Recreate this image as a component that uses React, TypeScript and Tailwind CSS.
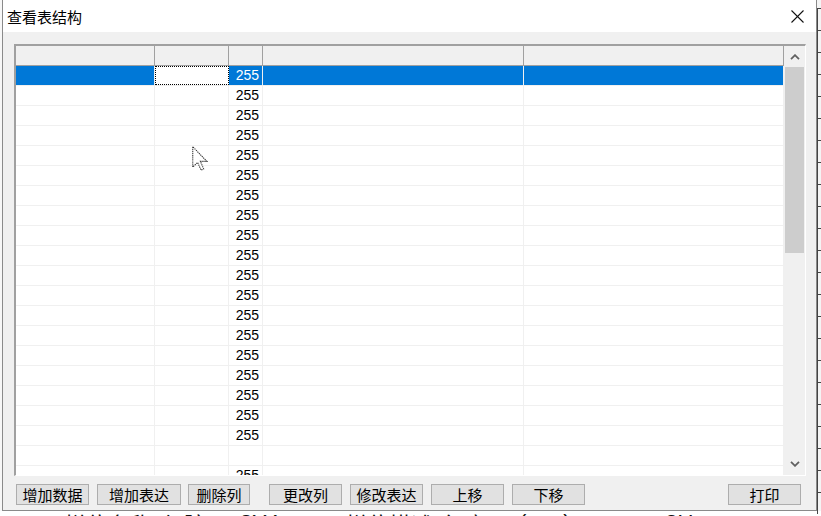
import React from "react";

const cjk = "font-['Noto_Sans_CJK_SC','Noto_Sans_CJK_TC',sans-serif]";

function Row({ v, sel }: { v: string; sel?: boolean }) {
  const bg = sel ? " bg-[#0078d7]" : "";
  return (
    <div className="flex h-[20px] shrink-0">
      <div className={"w-[139px] shrink-0 border-r border-b border-[#f0f0f0]" + bg} />
      {sel ? (
        <div className="w-[74px] shrink-0 border-b border-[#f0f0f0] bg-white">
          <div className="h-full w-full border border-dotted border-black" />
        </div>
      ) : (
        <div className="w-[74px] shrink-0 border-r border-b border-[#f0f0f0]" />
      )}
      <div
        className={
          "w-[34px] shrink-0 border-r border-b border-[#f0f0f0] pr-[3px] text-right font-['Liberation_Sans',Arial,sans-serif] text-[14px] leading-[19px]" +
          (sel ? " bg-[#0078d7] text-white" : " text-black")
        }
      >
        {v}
      </div>
      <div className={"w-[261px] shrink-0 border-r border-b border-[#f0f0f0]" + bg} />
      <div className={"w-[260px] shrink-0 border-r border-b border-[#f0f0f0]" + bg} />
    </div>
  );
}

function Chevron({ up }: { up?: boolean }) {
  return (
    <svg width="10" height="6" viewBox="0 0 10 6" className="block">
      {up ? (
        <polyline points="1,5.2 5,1.2 9,5.2" fill="none" stroke="#606060" strokeWidth="1.8" />
      ) : (
        <polyline points="1,0.8 5,4.8 9,0.8" fill="none" stroke="#606060" strokeWidth="1.8" />
      )}
    </svg>
  );
}

export default function App() {
  const rows: string[] = [];
  for (let i = 0; i < 19; i++) rows.push("255");
  rows.push("");
  rows.push("255");

  return (
    <div className="relative h-[516px] w-[821px] overflow-hidden bg-[#f7f7f7]">
      <div className="flex h-[511px]">
        <div className="w-[2px] shrink-0 bg-[#f7f7f7]" />
        {/* window */}
        <div className="flex h-[511px] w-[815px] shrink-0 flex-col border-x border-b border-[#8a8a8a] bg-[#f0f0f0]">
          {/* title bar */}
          <div className="flex h-[32px] shrink-0 items-center justify-between bg-white pl-[4px] pr-[12px]">
            <span className={cjk + " text-[15px] leading-none text-black"}>查看表结构</span>
            <svg width="13" height="13" viewBox="0 0 13 13" className="block">
              <line x1="0.5" y1="0.5" x2="12.5" y2="12.5" stroke="#111" strokeWidth="1.1" />
              <line x1="12.5" y1="0.5" x2="0.5" y2="12.5" stroke="#111" strokeWidth="1.1" />
            </svg>
          </div>
          {/* body */}
          <div className="flex flex-1 flex-col pl-[11px] pt-[12px]">
            {/* grid */}
            <div className="flex h-[432px] w-[792px] border-t-2 border-l-2 border-t-[#a0a0a0] border-l-[#a0a0a0] border-r border-b border-r-white border-b-white bg-white">
              <div className="flex w-[768px] shrink-0 flex-col overflow-hidden">
                <div className="flex h-[20px] shrink-0 border-b border-[#a0a0a0] bg-[#f0f0f0]">
                  <div className="w-[139px] shrink-0 border-r border-[#a0a0a0]" />
                  <div className="w-[74px] shrink-0 border-r border-[#a0a0a0]" />
                  <div className="w-[34px] shrink-0 border-r border-[#a0a0a0]" />
                  <div className="w-[261px] shrink-0 border-r border-[#a0a0a0]" />
                  <div className="w-[260px] shrink-0 border-r border-[#a0a0a0]" />
                </div>
                <div className="flex flex-1 flex-col overflow-hidden">
                  {rows.map((v, i) => (
                    <Row key={i} v={v} sel={i === 0} />
                  ))}
                </div>
              </div>
              {/* scrollbar */}
              <div className="flex w-[21px] shrink-0 flex-col bg-[#f0f0f0]">
                <div className="flex h-[21px] shrink-0 items-center justify-center">
                  <Chevron up />
                </div>
                <div className="ml-[1px] h-[186px] w-[19px] shrink-0 bg-[#cdcdcd]" />
                <div className="flex-1" />
                <div className="flex h-[20px] shrink-0 items-start justify-center pt-[6px]">
                  <Chevron />
                </div>
              </div>
            </div>
            {/* buttons */}
            <div className={cjk + " mt-[8px] flex h-[21px] text-[15px] leading-none text-black"}>
              <button className="ml-[2px] flex h-[21px] w-[73px] items-center justify-center border border-[#adadad] bg-[#e1e1e1]">增加数据</button>
              <button className="ml-[8px] flex h-[21px] w-[84px] items-center justify-center border border-[#adadad] bg-[#e1e1e1]">增加表达</button>
              <button className="ml-[7px] flex h-[21px] w-[62px] items-center justify-center border border-[#adadad] bg-[#e1e1e1]">删除列</button>
              <button className="ml-[19px] flex h-[21px] w-[73px] items-center justify-center border border-[#adadad] bg-[#e1e1e1]">更改列</button>
              <button className="ml-[8px] flex h-[21px] w-[73px] items-center justify-center border border-[#adadad] bg-[#e1e1e1]">修改表达</button>
              <button className="ml-[8px] flex h-[21px] w-[73px] items-center justify-center border border-[#adadad] bg-[#e1e1e1]">上移</button>
              <button className="ml-[8px] flex h-[21px] w-[73px] items-center justify-center border border-[#adadad] bg-[#e1e1e1]">下移</button>
              <button className="ml-[143px] flex h-[21px] w-[73px] items-center justify-center border border-[#adadad] bg-[#e1e1e1]">打印</button>
            </div>
          </div>
        </div>
        {/* right desktop strip */}
        <div className="flex w-[4px] shrink-0 flex-col bg-[#f4f4f4] pt-[8px]">
          {Array.from({ length: 23 }).map((_, i) => (
            <div key={i} className="h-[22px] shrink-0 border-t border-l border-[#444]" />
          ))}
        </div>
      </div>
      {/* bottom desktop strip */}
      <div className={cjk + " flex h-[5px] overflow-hidden bg-white text-[22px] leading-none text-[#111]"}>
        <span className="ml-[64px] whitespace-nowrap pt-[1px]">栏位名称 众 脏</span>
        <span className="ml-[22px] whitespace-nowrap pt-[1px] font-['Liberation_Sans',sans-serif]">u8Y4</span>
        <span className="ml-[66px] whitespace-nowrap pt-[1px]">栏位描述 言 案</span>
        <span className="ml-[32px] whitespace-nowrap pt-[1px] font-['Liberation_Sans',sans-serif]">(nnn)ggg</span>
        <span className="ml-[58px] whitespace-nowrap pt-[1px] font-['Liberation_Sans',sans-serif]">3U</span>
        <span className="ml-[124px] whitespace-nowrap pt-[1px] font-['Liberation_Sans',sans-serif]">m</span>
      </div>
      {/* mouse cursor */}
      <svg
        width="16"
        height="25"
        viewBox="0 0 12 19"
        className="absolute left-[192px] top-[146px]"
      >
        <path
          d="M0.5,0.5 L0.5,16 L4.2,12.5 L6.8,18.3 L8.8,17.4 L6.3,11.7 L11.2,11.7 Z"
          fill="#fff"
          stroke="#333"
          strokeWidth="0.8"
          strokeDasharray="1 0.6"
        />
      </svg>
    </div>
  );
}
